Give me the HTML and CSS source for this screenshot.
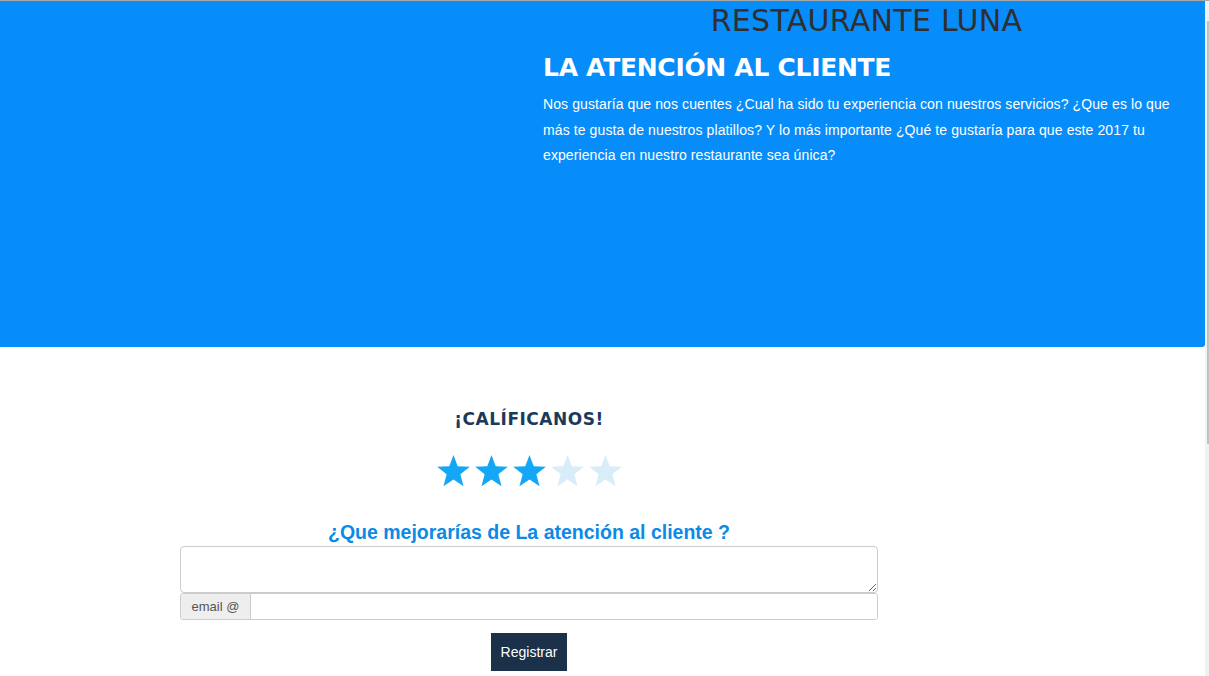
FILE: index.html
```html
<!DOCTYPE html>
<html lang="es">
<head>
<meta charset="utf-8">
<title>Restaurante Luna</title>
<link rel="stylesheet" href="styles.css">
</head>
<body>
<div class="page">
  <main class="content">
    <section class="hero">
      <div class="hero-col">
        <h1 class="brand">RESTAURANTE LUNA</h1>
        <h2 class="hero-title">LA ATENCIÓN AL CLIENTE</h2>
        <p class="hero-text">Nos gustaría que nos cuentes ¿Cual ha sido tu experiencia con nuestros servicios? ¿Que es lo que más te gusta de nuestros platillos? Y lo más importante ¿Qué te gustaría para que este 2017 tu experiencia en nuestro restaurante sea única?</p>
      </div>
    </section>
    <section class="rate">
      <div class="rate-col">
        <h3 class="rate-title">¡CALÍFICANOS!</h3>
        <div class="stars">
          <svg class="star on" viewBox="0 0 24 23"><polygon points="12,0.5 14.9,8.2 23.2,8.6 16.7,13.8 18.9,21.9 12,17.3 5.1,21.9 7.3,13.8 0.8,8.6 9.1,8.2"/></svg>
          <svg class="star on" viewBox="0 0 24 23"><polygon points="12,0.5 14.9,8.2 23.2,8.6 16.7,13.8 18.9,21.9 12,17.3 5.1,21.9 7.3,13.8 0.8,8.6 9.1,8.2"/></svg>
          <svg class="star on" viewBox="0 0 24 23"><polygon points="12,0.5 14.9,8.2 23.2,8.6 16.7,13.8 18.9,21.9 12,17.3 5.1,21.9 7.3,13.8 0.8,8.6 9.1,8.2"/></svg>
          <svg class="star off" viewBox="0 0 24 23"><polygon points="12,0.5 14.9,8.2 23.2,8.6 16.7,13.8 18.9,21.9 12,17.3 5.1,21.9 7.3,13.8 0.8,8.6 9.1,8.2"/></svg>
          <svg class="star off" viewBox="0 0 24 23"><polygon points="12,0.5 14.9,8.2 23.2,8.6 16.7,13.8 18.9,21.9 12,17.3 5.1,21.9 7.3,13.8 0.8,8.6 9.1,8.2"/></svg>
        </div>
        <h4 class="question">¿Que mejorarías de La atención al cliente ?</h4>
        <form class="form">
          <textarea class="comment"></textarea>
          <div class="input-group">
            <span class="addon">email @</span>
            <input class="email" type="text">
          </div>
          <div class="actions">
            <button class="btn" type="button">Registrar</button>
          </div>
        </form>
      </div>
    </section>
  </main>
  <aside class="scrollbar"><div class="thumb"></div></aside>
</div>
</body>
</html>
```

FILE: styles.css
```css
html, body {
  margin: 0;
  padding: 0;
  height: 100%;
  overflow: hidden;
}
body {
  font-family: "Liberation Sans", Arial, sans-serif;
  font-size: 14px;
  color: #333;
  background: #fff;
}
.page {
  display: flex;
  height: 676px;
  border-top: 1px solid #a6a6a6;
  box-sizing: border-box;
}
.content {
  width: 1205px;
  flex: none;
}
.scrollbar {
  width: 4px;
  flex: none;
  background: #f1f1f1;
  display: flex;
  justify-content: flex-end;
}
.thumb {
  width: 2px;
  height: 423px;
  margin-top: 20px;
  background: #c1c1c1;
}
.hero {
  background: #078df9;
  height: 346px;
  border-bottom-right-radius: 3px;
  box-sizing: border-box;
  padding-top: 3px;
}
.hero-col {
  margin-left: 543px;
  width: 647px;
}
.brand {
  margin: 0;
  text-align: center;
  font-family: "DejaVu Sans", sans-serif;
  font-weight: normal;
  font-size: 30px;
  line-height: 34px;
  color: #2f2f2f;
  letter-spacing: 0.3px;
}
.hero-title {
  margin: 14px 0 0;
  font-family: "DejaVu Sans", sans-serif;
  font-weight: bold;
  font-size: 25px;
  line-height: 32px;
  color: #fff;
  letter-spacing: -0.3px;
}
.hero-text {
  margin: 8px 0 0;
  color: #fff;
  font-size: 14px;
  line-height: 25.5px;
  letter-spacing: 0.1px;
}
.rate-col {
  margin-left: 180px;
  width: 698px;
  text-align: center;
  padding-top: 60px;
}
.rate-title {
  margin: 0;
  font-family: "DejaVu Sans", sans-serif;
  font-weight: bold;
  font-size: 17px;
  line-height: 24px;
  color: #1b3a5a;
  letter-spacing: 0.5px;
}
.stars {
  display: flex;
  justify-content: center;
  gap: 3px;
  margin-top: 23px;
}
.star {
  width: 35px;
  height: 34px;
  display: block;
}
.star.on { fill: #14a7f5; }
.star.off { fill: #d8edf8; }
.question {
  margin: 32px 0 0;
  font-size: 19.5px;
  line-height: 24px;
  font-weight: bold;
  color: #0b8ae6;
}
.form {
  margin: 2px 0 0;
}
.comment {
  display: block;
  width: 698px;
  height: 47px;
  box-sizing: border-box;
  border: 1px solid #ccc;
  border-radius: 4px;
  margin: 0;
  font: inherit;
}
.input-group {
  display: flex;
  height: 27px;
  box-sizing: border-box;
  border: 1px solid #ccc;
  border-radius: 3px;
  overflow: hidden;
}
.addon {
  width: 69px;
  flex: none;
  background: #eee;
  border-right: 1px solid #ccc;
  color: #555;
  font-size: 13px;
  line-height: 25px;
  text-align: center;
}
.email {
  flex: 1;
  border: 0;
  margin: 0;
  padding: 0 8px;
  font: inherit;
  outline: none;
}
.actions {
  display: flex;
  justify-content: center;
  margin-top: 13px;
}
.btn {
  background: #1b3049;
  color: #fff;
  border: 0;
  border-radius: 0;
  width: 76px;
  height: 38px;
  font-family: "Liberation Sans", Arial, sans-serif;
  font-size: 14px;
  padding: 0;
}
```
